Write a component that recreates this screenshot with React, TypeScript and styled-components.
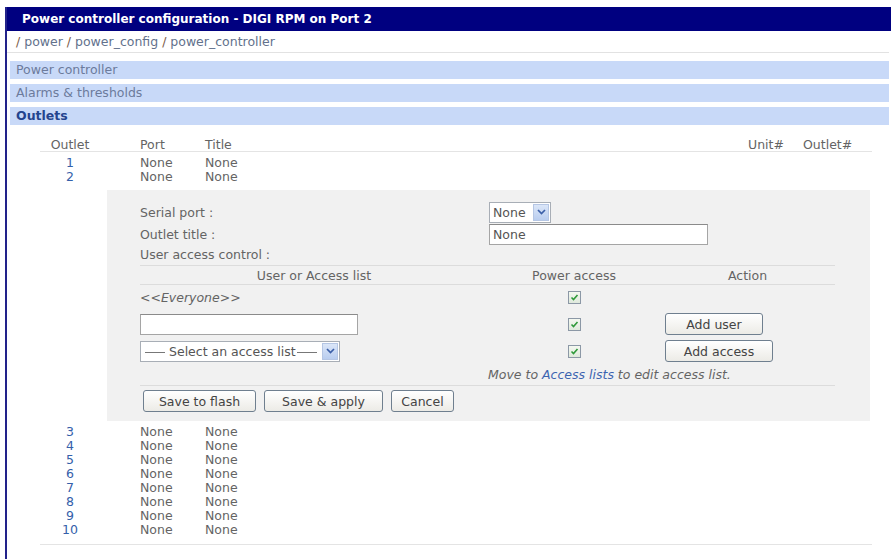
import * as React from "react";
import styled, { createGlobalStyle } from "styled-components";

const GlobalStyle = createGlobalStyle`
  body {
    margin: 0;
    background: #fff;
    font-family: "DejaVu Sans", Verdana, sans-serif;
    font-size: 12.5px;
    color: #646464;
  }
`;

const Frame = styled.div`
  margin: 7px 2px 0 5px;
  border-left: 2px solid #22228a;
  min-height: 552px;
`;

const TitleBar = styled.div`
  height: 24px;
  line-height: 24px;
  padding-left: 15px;
  background: #000080;
  color: #fff;
  font-weight: bold;
  font-size: 12px;
`;

const Breadcrumb = styled.div`
  height: 21px;
  line-height: 21px;
  padding-left: 9px;
  margin-right: 2px;
  border-bottom: 1px solid #e2e2e2;
  color: #62718c;
`;

const Slash = styled.span`
  color: #7a5a48;
`;

const Sections = styled.div`
  margin: 8px 2px 0 3px;
  display: flex;
  flex-direction: column;
  gap: 5px;
`;

const SectionBar = styled.div<{ $active?: boolean }>`
  height: 18px;
  line-height: 18px;
  padding-left: 6px;
  background: #c8d9f8;
  color: ${(p) => (p.$active ? "#24448e" : "#6c7b9c")};
  font-weight: ${(p) => (p.$active ? "bold" : "normal")};
`;

const OutletList = styled.div`
  margin-left: 33px;
  width: 832px;
  padding-bottom: 7px;
  border-bottom: 1px solid #e4e4e4;
`;

const Row = styled.div<{ $head?: boolean }>`
  display: grid;
  grid-template-columns: 60px 105px 1fr 55px 69px;
  height: ${(p) => (p.$head ? "17px" : "14px")};
  line-height: 14px;
  margin-top: ${(p) => (p.$head ? "10px" : "0")};
  margin-bottom: ${(p) => (p.$head ? "4px" : "0")};
  border-bottom: ${(p) => (p.$head ? "1px solid #e4e4e4" : "none")};
  padding-top: ${(p) => (p.$head ? "3px" : "0")};
  box-sizing: border-box;
`;

const Cell = styled.span<{ $center?: boolean; $pad?: boolean }>`
  text-align: ${(p) => (p.$center ? "center" : "left")};
  padding-left: ${(p) => (p.$pad ? "40px" : "0")};
  white-space: nowrap;
`;

const OutletLink = styled.a`
  text-align: center;
  color: #3460aa;
  text-decoration: none;
`;

const Panel = styled.div`
  margin: 6px 0 4px 67px;
  width: 763px;
  background: #f1f1f1;
  padding: 11px 0 9px 33px;
  box-sizing: border-box;
`;

const FieldRow = styled.div<{ $h: number; $gap?: number }>`
  display: grid;
  grid-template-columns: 349px 1fr;
  align-items: center;
  height: ${(p) => p.$h}px;
  margin-bottom: ${(p) => p.$gap ?? 0}px;
`;

const SelectBox = styled.div<{ $w: number }>`
  width: ${(p) => p.$w}px;
  height: 21px;
  box-sizing: border-box;
  border: 1px solid #a8aeb6;
  background: #fff;
  display: flex;
  align-items: center;
  justify-content: space-between;
  color: #555;
`;

const SelectText = styled.span`
  padding-left: 3px;
  white-space: nowrap;
`;

const Dash = styled.span`
  display: inline-block;
  width: 20px;
  height: 1px;
  background: #777;
  vertical-align: middle;
  margin: 0 4px 0 1px;
`;

const ArrowBox = styled.span`
  width: 16px;
  height: 17px;
  margin-right: 1px;
  background: linear-gradient(#dbe6f8, #b9cdef);
  border: 1px solid #b5c6e4;
  box-sizing: border-box;
  display: flex;
  align-items: center;
  justify-content: center;
`;

const TextBox = styled.div<{ $w: number }>`
  width: ${(p) => p.$w}px;
  height: 21px;
  line-height: 19px;
  box-sizing: border-box;
  border: 1px solid #a5a5a5;
  border-top-color: #8a8a8a;
  background: #fff;
  padding-left: 3px;
  color: #555;
`;

const AccessTable = styled.div`
  width: 695px;
  margin-top: 4px;
`;

const AccessRow = styled.div<{ $h: number; $head?: boolean; $gap?: number }>`
  display: grid;
  grid-template-columns: 348px 172px 175px;
  align-items: center;
  box-sizing: border-box;
  height: ${(p) => p.$h}px;
  margin-bottom: ${(p) => p.$gap ?? 0}px;
  border-top: ${(p) => (p.$head ? "1px solid #dcdcdc" : "none")};
  border-bottom: ${(p) => (p.$head ? "1px solid #dcdcdc" : "none")};
  text-align: ${(p) => (p.$head ? "center" : "left")};
`;

const Center = styled.div`
  display: flex;
  justify-content: center;
`;

const ActionCell = styled.div`
  padding-left: 5px;
`;

const Everyone = styled.span`
  font-style: italic;
`;

const NoteRow = styled.div`
  height: 22px;
  line-height: 24px;
  padding-left: 348px;
  border-bottom: 1px solid #dcdcdc;
  font-style: italic;
  white-space: nowrap;
`;

const NoteLink = styled.a`
  color: #3c64b0;
  text-decoration: none;
`;

const ButtonBar = styled.div`
  display: flex;
  gap: 8px;
  margin: 4px 0 0 3px;
`;

const Button = styled.button<{ $w: number }>`
  width: ${(p) => p.$w}px;
  height: 22px;
  padding: 0;
  border: 1px solid #6f7f8f;
  border-radius: 3px;
  background: linear-gradient(#ffffff, #ecebe6);
  font-family: "DejaVu Sans", Verdana, sans-serif;
  font-size: 12.5px;
  color: #444;
`;

const CheckBoxBox = styled.span`
  width: 13px;
  height: 13px;
  box-sizing: border-box;
  border: 1px solid #8c98a6;
  background: linear-gradient(#f4f8f0, #dfe9dc);
  display: flex;
  align-items: center;
  justify-content: center;
`;

const Check = () => (
  <CheckBoxBox>
    <svg width="9" height="9" viewBox="0 0 9 9">
      <polyline points="1.5,4.5 3.5,6.5 7.5,2" fill="none" stroke="#2f9a3a" strokeWidth="1.6" />
    </svg>
  </CheckBoxBox>
);

const Select = ({ children, w }: { children: React.ReactNode; w: number }) => (
  <SelectBox $w={w}>
    <SelectText>{children}</SelectText>
    <ArrowBox>
      <svg width="9" height="6" viewBox="0 0 9 6">
        <polyline points="1,1 4.5,4.5 8,1" fill="none" stroke="#3b5fa8" strokeWidth="1.7" />
      </svg>
    </ArrowBox>
  </SelectBox>
);

const OutletRow = ({ n }: { n: number }) => (
  <Row>
    <OutletLink href="#">{n}</OutletLink>
    <Cell $pad>None</Cell>
    <Cell>None</Cell>
    <Cell />
    <Cell />
  </Row>
);

const EditPanel = () => (
  <Panel>
    <FieldRow $h={22} $gap={1}>
      <span>Serial port :</span>
      <Select w={62}>None</Select>
    </FieldRow>
    <FieldRow $h={21} $gap={2}>
      <span>Outlet title :</span>
      <TextBox $w={219}>None</TextBox>
    </FieldRow>
    <FieldRow $h={14}>
      <span>User access control :</span>
    </FieldRow>
    <AccessTable>
      <AccessRow $h={20} $head>
        <span>User or Access list</span>
        <span>Power access</span>
        <span>Action</span>
      </AccessRow>
      <AccessRow $h={24} $gap={3}>
        <Everyone>&lt;&lt;Everyone&gt;&gt;</Everyone>
        <Center>
          <Check />
        </Center>
        <span />
      </AccessRow>
      <AccessRow $h={24} $gap={3}>
        <TextBox $w={218} />
        <Center>
          <Check />
        </Center>
        <ActionCell>
          <Button $w={98}>Add user</Button>
        </ActionCell>
      </AccessRow>
      <AccessRow $h={24}>
        <Select w={200}>
          <Dash />
          Select an access list
          <Dash />
        </Select>
        <Center>
          <Check />
        </Center>
        <ActionCell>
          <Button $w={108}>Add access</Button>
        </ActionCell>
      </AccessRow>
      <NoteRow>
        Move to <NoteLink href="#">Access lists</NoteLink> to edit access list.
      </NoteRow>
    </AccessTable>
    <ButtonBar>
      <Button $w={113}>Save to flash</Button>
      <Button $w={119}>Save &amp; apply</Button>
      <Button $w={63}>Cancel</Button>
    </ButtonBar>
  </Panel>
);

export default function App() {
  const rest = [3, 4, 5, 6, 7, 8, 9, 10];
  return (
    <>
      <GlobalStyle />
      <Frame>
        <TitleBar>Power controller configuration - DIGI RPM on Port 2</TitleBar>
        <Breadcrumb>
          <Slash>/</Slash> power <Slash>/</Slash> power_config <Slash>/</Slash> power_controller
        </Breadcrumb>
        <Sections>
          <SectionBar>Power controller</SectionBar>
          <SectionBar>Alarms &amp; thresholds</SectionBar>
          <SectionBar $active>Outlets</SectionBar>
        </Sections>
        <OutletList>
          <Row $head>
            <Cell $center>Outlet</Cell>
            <Cell $pad>Port</Cell>
            <Cell>Title</Cell>
            <Cell>Unit#</Cell>
            <Cell>Outlet#</Cell>
          </Row>
          <OutletRow n={1} />
          <OutletRow n={2} />
          <EditPanel />
          {rest.map((n) => (
            <OutletRow key={n} n={n} />
          ))}
        </OutletList>
      </Frame>
    </>
  );
}
